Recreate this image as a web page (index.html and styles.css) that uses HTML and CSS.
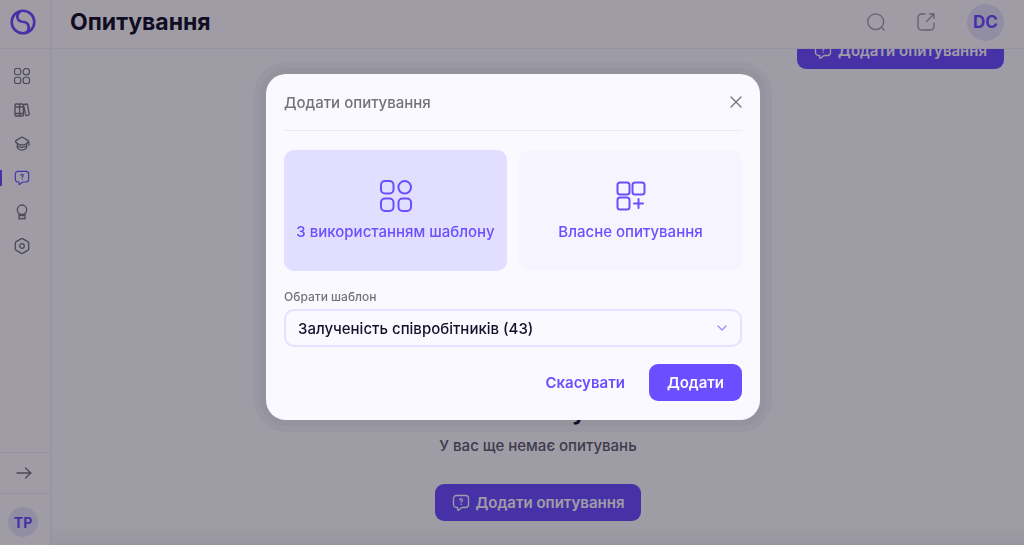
FILE: index.html
```
<!DOCTYPE html>
<html lang="uk">
<head>
	<meta charset="utf-8">
	<title>Опитування</title>
	<link rel="stylesheet" href="styles.css">
</head>
<body>

<!-- shared icons -->
<svg class="sprite" aria-hidden="true">
	<symbol id="i-grid" viewBox="0 0 32 32">
		<rect x="1" y="1" width="12.5" height="12.5" rx="4"/>
		<circle cx="24.7" cy="7.3" r="6.3"/>
		<rect x="1" y="18.5" width="12.5" height="12.5" rx="4"/>
		<rect x="18.5" y="18.5" width="12.5" height="12.5" rx="4"/>
	</symbol>
	<symbol id="i-chat" viewBox="0 0 18 18">
		<path d="M4.5 1.5h9a3 3 0 0 1 3 3v6a3 3 0 0 1-3 3H10l-3.5 2.7q-.8.4-.8-.5v-2.2H4.5a3 3 0 0 1-3-3v-6a3 3 0 0 1 3-3z"/>
		<path d="M7.8 6a1.300 1.300 0 1 1 2 1.200q-.7.4-.7 1M9.100 10.200v.2"/>
	</symbol>
</svg>

<div class="app">
	<aside class="sidebar">
		<a class="logo" href="#" aria-label="Головна">
			<svg width="26" height="26" viewBox="0 0 26 26">
				<circle cx="13" cy="13" r="11.3"/>
				<path d="M9.500 3C6 6 6.500 12.200 12.500 12.800C19.500 13.300 20 19 17 23"/>
			</svg>
		</a>
		<nav class="menu">
			<a href="#" aria-label="Панель"><svg width="16" height="16" viewBox="0 0 32 32" class="thick"><use href="#i-grid"/></svg></a>
			<a href="#" aria-label="Бібліотека"><svg width="16" height="16" viewBox="0 0 16 16"><path d="M2 2h2.600q1 0 1 1v10q0 1-1 1H2q-1 0-1-1V3q0-1 1-1zM6 2h2.400q1 0 1 1v10q0 1-1 1H5.600V3M1 5h8.400M1 11.500h8.400M10.500 2.500l2-.5q.8-.1 1 .8l1.700 9.200q.1.900-.7 1.100l-1.800.4q-.9.200-1.100-.7L9.700 4"/></svg></a>
			<a href="#" aria-label="Навчання"><svg width="16" height="16" viewBox="0 0 16 16"><path d="M7 1.500q1-.5 2 0l4.700 2.900q1.600 1.100 0 2.200L10 9.200q-2-1-4 0L2.300 6.600q-1.600-1.100 0-2.200zM3.300 7.800V11q0 1 1 1.800 3.700 2.600 7.400 0 1-.8 1-1.800V7.800M14.900 5.800v3.500M4 10.500q4 1.500 8 0"/></svg></a>
			<a href="#" class="active" aria-label="Опитування"><svg width="16" height="16"><use href="#i-chat"/></svg></a>
			<a href="#" aria-label="Досягнення"><svg width="16" height="16" viewBox="0 0 16 16"><circle cx="8" cy="5.700" r="4.700"/><path d="M5 9.500V15l1.500-.7L8 15l1.500-.7L11 15V9.500M5 11.500h6"/></svg></a>
			<a href="#" aria-label="Налаштування"><svg width="16" height="16" viewBox="0 0 16 16"><path d="M7 .9q1-.5 2 0l4.700 2.700q1 .6 1 1.700v5.400q0 1.100-1 1.700L9 15.100q-1 .5-2 0l-4.700-2.700q-1-.6-1-1.700V5.300q0-1.100 1-1.700z"/><circle cx="8" cy="8" r="2.300"/></svg></a>
		</nav>
		<button class="expand" aria-label="Розгорнути">
			<svg width="16" height="12" viewBox="0 0 16 12"><path d="M1 6h14M9.500 1l5.300 5-5.300 5"/></svg>
		</button>
		<div class="account"><span class="avatar small">TP</span></div>
	</aside>

	<header class="topbar">
		<h1>Опитування</h1>
		<a href="#" aria-label="Пошук"><svg width="18" height="18" viewBox="0 0 18 18"><circle cx="8.700" cy="8.700" r="7.900"/><path d="M14.800 14.800l2.200 2.200"/></svg></a>
		<a href="#" aria-label="Відкрити"><svg width="18" height="18" viewBox="0 0 18 18"><path d="M8 1H5Q1 1 1 5v8q0 4 4 4h8q4 0 4-4v-3M9.500 8.500L17 1M12.500 1H17v4.500"/></svg></a>
		<span class="avatar">DC</span>
	</header>

	<main class="content">
		<div class="toolbar">
			<button class="btn primary"><svg width="18" height="18"><use href="#i-chat"/></svg>Додати опитування</button>
		</div>
		<section class="empty">
			<h2>Немає опитувань</h2>
			<p>У вас ще немає опитувань</p>
			<button class="btn primary"><svg width="18" height="18"><use href="#i-chat"/></svg>Додати опитування</button>
		</section>
	</main>
</div>

<div class="overlay">
	<form class="modal" role="dialog" aria-labelledby="modal-title">
		<div class="modal-head">
			<h3 id="modal-title">Додати опитування</h3>
			<button type="button" class="close" aria-label="Закрити">
				<svg width="12" height="12" viewBox="0 0 12 12"><path d="M1 1l10 10M11 1L1 11"/></svg>
			</button>
		</div>
		<div class="options">
			<button type="button" class="option selected">
				<svg width="32" height="32"><use href="#i-grid"/></svg>
				З використанням шаблону
			</button>
			<button type="button" class="option">
				<svg width="32" height="32" viewBox="0 0 32 32"><rect x="2.500" y="2.500" width="12" height="12" rx="2.500"/><rect x="17.500" y="2.500" width="12" height="12" rx="2.500"/><rect x="2.500" y="17.500" width="12" height="12" rx="2.500"/><path d="M23.500 19v9M19 23.500h9"/></svg>
				Власне опитування
			</button>
		</div>
		<label for="template">Обрати шаблон</label>
		<div class="select">
			<select id="template">
				<option>Залученість співробітників (43)</option>
			</select>
			<svg width="10" height="6" viewBox="0 0 10 6"><path d="M1 1l4 4 4-4"/></svg>
		</div>
		<div class="actions">
			<button type="button" class="btn">Скасувати</button>
			<button type="submit" class="btn primary">Додати</button>
		</div>
	</form>
</div>

</body>
</html>
```

FILE: styles.css
```
* {box-sizing: border-box;}
body {margin: 0; font-family: Inter, "Open Sans", sans-serif; font-size: 15px; color: #14112a; background: #faf9ff;}
h1, h2, h3, p {margin: 0;}
button, select {font: inherit; color: inherit; background: none; border: 0; padding: 0;}
a {color: inherit;}
svg {display: block; fill: none; stroke: currentColor; stroke-width: 1.3; stroke-linecap: round; stroke-linejoin: round;}
.sprite {display: none;}

.app {display: grid; grid-template: 49px 1fr / 52px 1fr; height: 100vh;}

/* sidebar */
.sidebar {grid-row: 1 / 3; display: flex; flex-direction: column; border-right: 2px solid #f0effb; color: #74737d;}
.logo {display: flex; justify-content: center; align-items: center; height: 49px; padding-right: 4px; padding-bottom: 4px; border-bottom: 1px solid #edebfb; color: #6b4eff;}
.logo svg {stroke-width: 2.6;}
.menu {flex: 1; padding-top: 10px;}
.menu a {display: flex; justify-content: center; align-items: center; height: 34px; padding-right: 8px; border-left: 2px solid transparent;}
.menu .thick {stroke-width: 2.4;}
.menu .active {color: #6b4eff; height: 16px; margin: 9px 0; border-color: #6b4eff;}
.expand {display: flex; justify-content: center; align-items: center; height: 42px; padding-right: 2px; border-top: 1px solid #e9e7fb; border-bottom: 1px solid #e9e7fb;}
.account {display: flex; justify-content: center; padding: 13px 4px 8px 0;}

.avatar {display: flex; justify-content: center; align-items: center; width: 37px; height: 37px; border-radius: 50%; background: #e4e1fa; color: #6b4eff; font-size: 17px; font-weight: 700;}
.avatar.small {width: 30px; height: 30px; font-size: 14px;}

/* top bar */
.topbar {display: flex; align-items: center; gap: 32px; padding: 0 20px 4px 18px; border-bottom: 1px solid #edebfb; color: #9a99a3;}
.topbar h1 {flex: 1; font-size: 23px; font-weight: 700; color: #14112a;}

/* page */
.content {display: flex; flex-direction: column; justify-content: space-between; background: linear-gradient(to top, #efeef4, #f9f8fe 20px);}
.toolbar {display: flex; justify-content: flex-end; align-items: flex-end; height: 20px; padding-right: 20px; overflow: hidden;}
.empty {display: flex; flex-direction: column; align-items: center; padding-bottom: 24px;}
.empty h2 {font-size: 23px; line-height: 32px; font-weight: 700;}
.empty p {margin: 8px 0 28px; font-size: 15px; line-height: 20px; font-weight: 500; color: #5f5d6e;}

.btn {display: flex; flex: none; justify-content: center; align-items: center; gap: 6px; height: 37px; padding: 0 18px; border-radius: 9px; font-size: 15px; font-weight: 600; color: #6b4eff; white-space: nowrap;}
.btn.primary {background: #6b4eff; color: #faf9ff;}
.content .btn {padding: 0 17px;}

/* modal */
.overlay {position: fixed; inset: 0; display: flex; justify-content: center; align-items: flex-start; padding: 74px 0 0 2px; background: rgba(10, 5, 22, .38);}
.modal {width: 494px; padding: 0 18px 19px; border-radius: 20px; background: #faf9ff; box-shadow: 0 0 0 6px rgba(60, 50, 80, .04), 0 0 0 12px rgba(60, 50, 80, .04);}
.modal-head {display: flex; justify-content: space-between; align-items: center; height: 57px; border-bottom: 1px solid #ebe8ff; color: #73727c;}
.modal-head h3 {font-size: 15px; font-weight: 500;}
.options {display: grid; grid-template-columns: 1fr 1fr; gap: 12px; margin-top: 19px;}
.option {display: flex; flex-direction: column; justify-content: center; align-items: center; gap: 10px; height: 121px; border-radius: 10px; background: #f5f4ff; color: #6b4eff; font-weight: 500; white-space: nowrap;}
.option svg {stroke-width: 2;}
.option.selected {background: #e1deff;}
.modal label {display: block; margin: 18px 0 4px; font-size: 12px; line-height: 16px; font-weight: 500; color: #73727c;}
.select {position: relative;}
.select select {width: 100%; height: 38px; padding: 0 12px; border: 2px solid #e5e1ff; border-radius: 10px; font-weight: 500; appearance: none;}
.select svg {position: absolute; right: 15px; top: 16px; color: #9d8aff;}
.actions {display: flex; justify-content: flex-end; gap: 6px; margin-top: 17px;}
```
